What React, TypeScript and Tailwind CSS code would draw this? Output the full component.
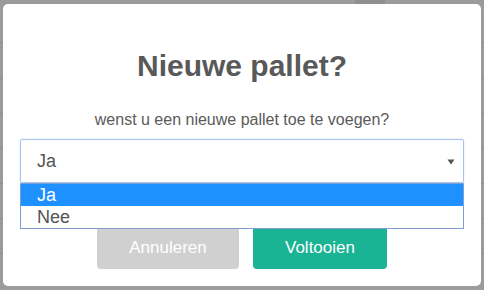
import React from 'react';

const rows = [42, 78, 113, 148, 183, 218, 253];

export default function App() {
    return (
        <div
            className="relative w-[484px] h-[290px] overflow-hidden bg-[#9b9b9b]"
            style={{ fontFamily: '"Liberation Sans", Arial, sans-serif' }}
        >
            {/* faint page behind the overlay */}
            <div className="absolute inset-0 flex flex-col">
                {rows.map((y) => (
                    <div key={y} className="absolute left-0 right-0 h-px bg-[#8f8f8f]" style={{ top: y }} />
                ))}
                <div className="absolute left-[355px] top-0 w-[30px] h-[4px] bg-[#8f8f8f]" />
            </div>

            <div className="absolute left-[3px] top-[4px] w-[478px] h-[282px] bg-white rounded-[5px] flex flex-col items-center">
                <h2 className="mt-[44px] text-[30px] leading-[36px] font-bold text-[#595959]">Nieuwe pallet?</h2>
                <p className="mt-[24px] text-[16px] leading-[24px] text-[#5a5a5a]">
                    wenst u een nieuwe pallet toe te voegen?
                </p>

                <div className="relative mt-[7px] w-[444px]">
                    <div className="h-[44px] border border-[#a6c4f2] rounded-[2px] shadow-[0_0_2px_#cfe0fa] flex items-center justify-between pl-[16px] pr-[8px] text-[18px] text-[#545454]">
                        <span>Ja</span>
                        <svg width="8" height="6" viewBox="0 0 8 6" className="mt-[1px]">
                            <path d="M0.5 0.5 H7.5 L4 5.5 Z" fill="#555" />
                        </svg>
                    </div>
                    <div className="absolute left-0 top-[44px] w-[444px] bg-white border border-[#7f9fd0] text-[18px] leading-[22px] z-10">
                        <div className="h-[22px] bg-[#1e90ff] text-white pl-[16px]">Ja</div>
                        <div className="h-[22px] text-[#545454] pl-[16px]">Nee</div>
                    </div>
                </div>

                <div className="mt-[43px] flex gap-[14px]">
                    <button className="w-[142px] h-[43px] rounded-[4px] bg-[#d0d0d0] text-white text-[17px]">
                        Annuleren
                    </button>
                    <button className="w-[134px] h-[43px] rounded-[4px] bg-[#1ab394] text-white text-[17px]">
                        Voltooien
                    </button>
                </div>
            </div>
        </div>
    );
}
